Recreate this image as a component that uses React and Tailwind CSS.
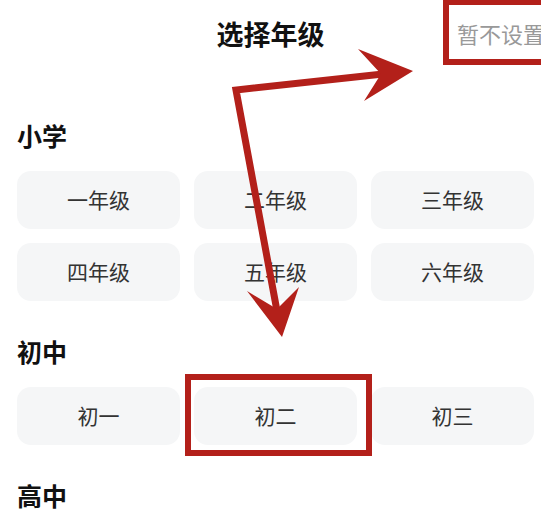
import React from "react";

const font = { fontFamily: '"Noto Sans CJK SC", "Noto Sans", sans-serif' };

const sections = [
  { title: "小学", items: ["一年级", "二年级", "三年级", "四年级", "五年级", "六年级"] },
  { title: "初中", items: ["初一", "初二", "初三"] },
  { title: "高中", items: [] },
];

// red markup drawn over the screen
const Annotations = () => (
  <svg
    className="pointer-events-none absolute left-0 top-0"
    width="541"
    height="529"
    viewBox="0 0 541 529"
  >
    <g fill="none" stroke="#b3201a" strokeWidth="6">
      <rect x="446" y="2" width="100" height="60" />
      <rect x="188" y="377" width="181" height="76" />
      <polyline points="383,74 236,90 277,311" strokeLinejoin="miter" strokeWidth="7" />
    </g>
    <g fill="#b3201a">
      <polygon points="358,49 413,71 364,101 381,74" />
      <polygon points="247,291 282,337 299,287 277,309" />
    </g>
  </svg>
);

export default function App() {
  return (
    <div className="relative h-[529px] w-[541px] overflow-hidden bg-white" style={font}>
      {/* header */}
      <div className="grid h-[66px] grid-cols-[1fr_auto_1fr] items-center">
        <div />
        <h1 className="text-[27px] font-bold leading-none text-[#111]">选择年级</h1>
        <div className="flex justify-end">
          <span className="mr-[-4px] whitespace-nowrap text-[22px] leading-none text-[#999]">
            暂不设置
          </span>
        </div>
      </div>

      <div className="flex flex-col gap-[38px] px-[17px] pt-[57px]">
        {sections.map((s) => (
          <div key={s.title} className="flex flex-col gap-[24px]">
            <div className="h-[24px] text-[25px] font-bold leading-none text-[#111]">
              {s.title}
            </div>
            {s.items.length > 0 && (
              <div className="grid w-[517px] grid-cols-3 gap-[14px]">
                {s.items.map((it) => (
                  <button
                    key={it}
                    className="flex h-[58px] items-center justify-center rounded-[14px] bg-[#f5f6f7] text-[21px] text-[#333]"
                  >
                    {it}
                  </button>
                ))}
              </div>
            )}
          </div>
        ))}
      </div>

      <Annotations />
    </div>
  );
}
